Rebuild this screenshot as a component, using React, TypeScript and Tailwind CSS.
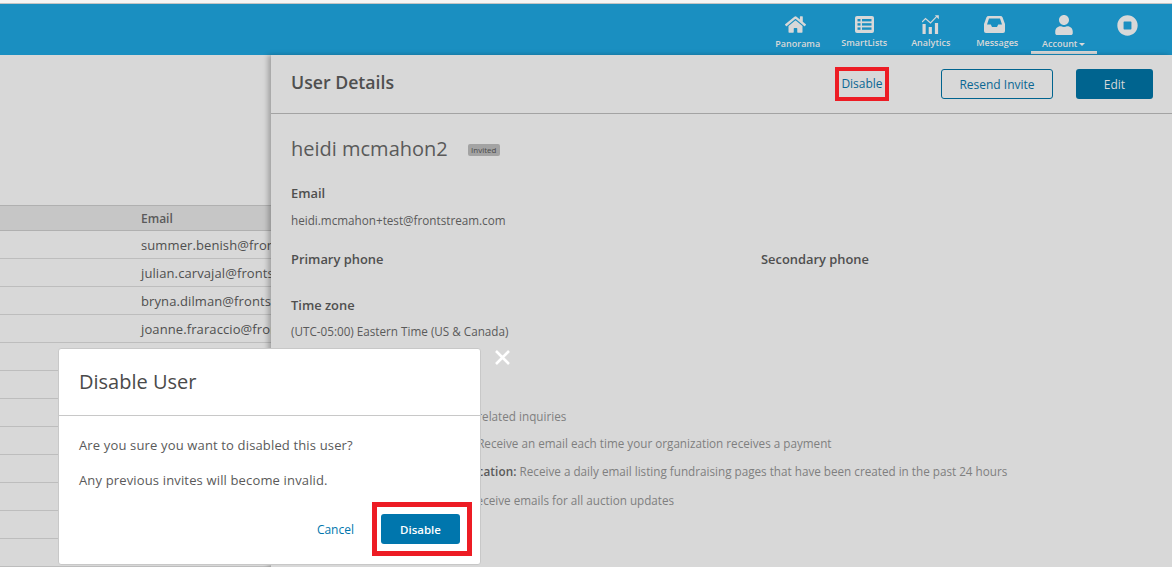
import React from "react";
import { FaHome, FaUser, FaStopCircle } from "react-icons/fa";

const ListIcon = () => (
  <svg width="19" height="17" viewBox="0 0 19 17" aria-hidden="true">
    <rect width="19" height="17" rx="2" fill="#d8d8d8" />
    <g fill="#1a8fc1">
      <rect x="2.5" y="3" width="3" height="2.4" />
      <rect x="2.5" y="7.2" width="3" height="2.4" />
      <rect x="2.5" y="11.4" width="3" height="2.4" />
      <rect x="7" y="3" width="9.5" height="2.4" />
      <rect x="7" y="7.2" width="9.5" height="2.4" />
      <rect x="7" y="11.4" width="9.5" height="2.4" />
    </g>
  </svg>
);

const ChartIcon = () => (
  <svg width="17" height="19" viewBox="0 0 17 19" aria-hidden="true">
    <g fill="#d8d8d8">
      <rect x="0.5" y="9" width="3.2" height="10" />
      <rect x="6.7" y="12" width="3.2" height="7" />
      <rect x="12.9" y="8" width="3.2" height="11" />
    </g>
    <path d="M0 7 L3.5 3.5 L8.5 8 L15 1.2" stroke="#d8d8d8" strokeWidth="1.2" fill="none" />
    <path d="M12.8 0.3 H16.8 V4.3 Z" fill="#d8d8d8" />
  </svg>
);

const InboxIcon = () => (
  <svg width="21" height="17" viewBox="0 0 21 17" className="mr-[5px]" aria-hidden="true">
    <path d="M4.5 0 H16.5 Q18 0 18.6 1.4 L21 8 V15 Q21 17 19 17 H2 Q0 17 0 15 V8 L2.4 1.4 Q3 0 4.5 0 Z" fill="#d8d8d8" />
    <path d="M5 2.5 H16 L18 8.5 H14.2 L13 11 H8 L6.8 8.5 H3 Z" fill="#1a8fc1" />
  </svg>
);

const nav = [
  { label: "Panorama", icon: <FaHome size={21} className="text-[#d8d8d8] mr-[5px]" />, cls: "pt-[10px]", gap: "mt-[3px]" },
  { label: "SmartLists", icon: <ListIcon />, cls: "pt-[12px]", gap: "mt-[4px]" },
  { label: "Analytics", icon: <ChartIcon />, cls: "pt-[11px]", gap: "mt-[3px]" },
  { label: "Messages", icon: <InboxIcon />, cls: "pt-[12px]", gap: "mt-[4px]" },
];

const emails = [
  "summer.benish@frontstream.com",
  "julian.carvajal@frontstream.com",
  "bryna.dilman@frontstream.com",
  "joanne.fraraccio@frontstream.com",
  "", "", "", "", "", "", "", "",
];

const font = { fontFamily: '"Open Sans", sans-serif' };

export default function App() {
  return (
    <div className="relative w-[1172px] h-[567px] overflow-hidden bg-[#d8d8d8] text-[#4a4a4a]" style={font}>
      <div className="h-[3px] bg-[#f4f4f4]" />
      <div className="h-px bg-[#c4c4c4]" />
      <header className="h-[51px] bg-[#1a8fc1] flex justify-end pr-[13px]">
        {nav.map((n) => (
          <div key={n.label} className={`w-[66.5px] flex flex-col items-center ${n.cls}`}>
            <div className="flex items-center justify-center">{n.icon}</div>
            <span className={`${n.gap} text-[9px] leading-[12px] font-semibold text-[#d8d8d8] whitespace-nowrap`}>{n.label}</span>
          </div>
        ))}
        <div className="w-[66.5px] flex flex-col items-center pt-[11px] pb-0 border-b-[3px] border-[#d8d8d8] h-[50px]">
          <FaUser size={20} className="text-[#d8d8d8]" />
          <span className="mt-[3px] text-[9px] leading-[12px] font-semibold text-[#d8d8d8] flex items-center gap-[2px]">
            Account
            <span className="w-0 h-0 border-x-[3px] border-x-transparent border-t-[3px] border-t-[#d8d8d8]" />
          </span>
        </div>
        <div className="w-[62px] flex justify-start pl-[20px] pt-[11px]">
          <FaStopCircle size={21} className="text-[#d8d8d8]" />
        </div>
      </header>

      <div className="flex h-[512px]">
        <div className="w-[271px] shrink-0 pt-[150px] overflow-hidden">
          <div className="w-[500px]">
            <div className="h-[26px] bg-[#c6c6c6] border-y border-[#b0b0b0] pl-[141px] text-[12px] font-semibold leading-[26px] text-[#5a5a5a]">Email</div>
            {emails.map((e, i) => (
              <div key={i} className="h-[28px] border-b border-[#bdbdbd] pl-[141px] text-[13px] tracking-[0.1px] leading-[28px] text-[#4f4f4f] whitespace-nowrap">{e}</div>
            ))}
          </div>
        </div>

        <main className="flex-1 bg-[#d8d8d8] shadow-[-3px_0_5px_rgba(0,0,0,0.25)] relative">
          <div className="h-[59px] flex items-center pl-[20px] pr-[19px] border-b border-[#a3a3a3]">
            <h1 className="text-[17.7px] font-semibold text-[#4f4f4f] flex-1 -mt-[3px]">User Details</h1>
            <div className="border-[4px] border-[#ed1c24] w-[54px] h-[34px] flex items-center justify-center text-[12px] font-normal leading-none text-[#0a6793] -mt-[1px] pt-[1px]">Disable</div>
            <div className="ml-[52px] w-[112px] h-[30px] pt-[1px] rounded-[3px] border border-[#00648f] flex items-center justify-center text-[12px] font-medium text-[#0a6793]">Resend Invite</div>
            <div className="ml-[23px] w-[77px] h-[30px] pt-[1px] rounded-[3px] bg-[#00648f] flex items-center justify-center text-[12px] font-medium text-[#d8d8d8]">Edit</div>
          </div>
          <div className="pl-[20px]">
            <div className="flex items-center pt-[20px]">
              <span className="text-[20px] leading-[30px] text-[#5a5a5a]">heidi mcmahon2</span>
              <span className="ml-[20px] mt-[2px] h-[12px] w-[32px] rounded-[2px] bg-[#a3a3a3] text-[8px] leading-[12px] text-center text-[#4a4a4a]">Invited</span>
            </div>
            <div className="mt-[20px] text-[12.9px] leading-[18px] font-semibold text-[#4f4f4f]">Email</div>
            <div className="mt-[10px] text-[11.7px] leading-[16px] text-[#5a5a5a]">heidi.mcmahon+test@frontstream.com</div>
            <div className="mt-[22px] flex text-[12.9px] leading-[18px] font-semibold text-[#4f4f4f]">
              <div className="w-[470px]">Primary phone</div>
              <div>Secondary phone</div>
            </div>
            <div className="mt-[28px] text-[12.9px] leading-[18px] font-semibold text-[#4f4f4f]">Time zone</div>
            <div className="mt-[9px] text-[11.7px] leading-[16px] text-[#5a5a5a]">(UTC-05:00) Eastern Time (US &amp; Canada)</div>
            <div className="mt-[69px] text-[11.7px] text-[#7f7f7f] whitespace-nowrap">
              <div className="h-[27px] leading-[16px]"><b className="font-semibold text-[#5a5a5a]">Support:</b><span className="ml-[21px]">Receive emails for all related inquiries</span></div>
              <div className="h-[28px] leading-[16px]"><b className="font-semibold text-[#5a5a5a]">Payment Notification:</b> <span className="ml-[60px]">Receive an email each time your organization receives a payment</span></div>
              <div className="h-[29px] leading-[16px]"><b className="font-semibold text-[#5a5a5a] tracking-[0.12px]">Fundraising Page Creation Notification:</b> <span>Receive a daily email listing fundraising pages that have been created in the past 24 hours</span></div>
              <div className="leading-[16px]"><b className="font-semibold text-[#5a5a5a]">Auction Notification:</b> <span className="ml-[59px]">Receive emails for all auction updates</span></div>
            </div>
          </div>
        </main>
      </div>

      <svg width="15" height="15" viewBox="0 0 15 15" className="absolute left-[495px] top-[350px]" aria-hidden="true">
        <path d="M1 1 L14 14 M14 1 L1 14" stroke="#fff" strokeWidth="2.6" />
      </svg>

      <div className="absolute left-[58px] top-[348px] w-[423px] h-[217px] bg-white rounded-[3px] border border-[#c8c8c8]">
        <div className="h-[67px] border-b border-[#c8c8c8] pl-[20px] flex items-center text-[20px] text-[#4a4a4a]">Disable User</div>
        <div className="pl-[20px] pt-[20px] text-[13px] leading-[18px] tracking-[0.15px] text-[#5a5a5a]">
          <p>Are you sure you want to disabled this user?</p>
          <p className="mt-[17px]">Any previous invites will become invalid.</p>
        </div>
        <div className="absolute right-[8px] bottom-[8px] flex items-center">
          <span className="text-[12px] font-medium text-[#0076ad] mr-[18px] pt-[2px]">Cancel</span>
          <div className="border-[5px] border-[#ed1c24] w-[100px] h-[54px] flex items-center justify-start pl-[4px]">
            <div className="w-[79px] h-[30px] pt-[1px] rounded-[3px] bg-[#0076ad] flex items-center justify-center text-[11.5px] font-semibold text-white">Disable</div>
          </div>
        </div>
      </div>
    </div>
  );
}
